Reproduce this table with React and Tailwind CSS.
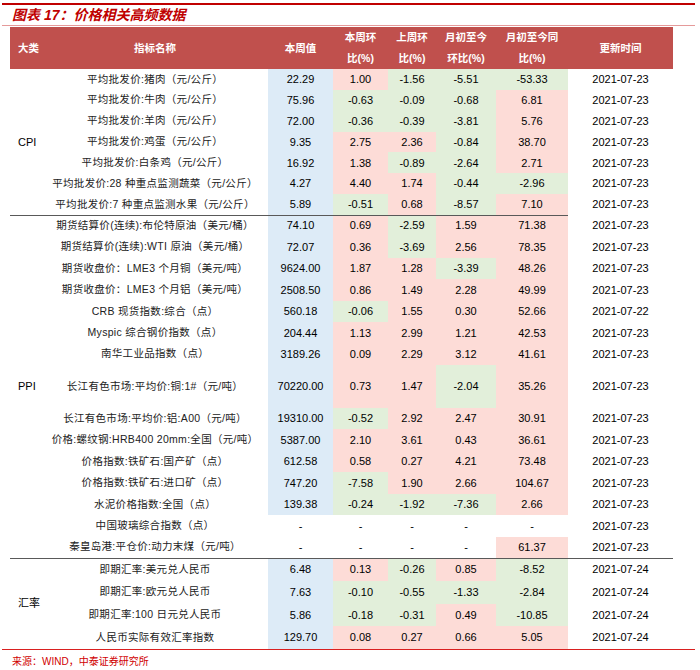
import React from "react";

const cpi = [
  ["平均批发价:猪肉（元/公斤）", "22.29", "1.00", "-1.56", "-5.51", "-53.33", "2021-07-23"],
  ["平均批发价:牛肉（元/公斤）", "75.96", "-0.63", "-0.09", "-0.68", "6.81", "2021-07-23"],
  ["平均批发价:羊肉（元/公斤）", "72.00", "-0.36", "-0.39", "-3.81", "5.76", "2021-07-23"],
  ["平均批发价:鸡蛋（元/公斤）", "9.35", "2.75", "2.36", "-0.84", "38.70", "2021-07-23"],
  ["平均批发价:白条鸡（元/公斤）", "16.92", "1.38", "-0.89", "-2.64", "2.71", "2021-07-23"],
  ["平均批发价:28 种重点监测蔬菜（元/公斤）", "4.27", "4.40", "1.74", "-0.44", "-2.96", "2021-07-23"],
  ["平均批发价:7 种重点监测水果（元/公斤）", "5.89", "-0.51", "0.68", "-8.57", "7.10", "2021-07-23"],
];

const ppi = [
  ["期货结算价(连续):布伦特原油（美元/桶）", "74.10", "0.69", "-2.59", "1.59", "71.38", "2021-07-23"],
  ["期货结算价(连续):WTI 原油（美元/桶）", "72.07", "0.36", "-3.69", "2.56", "78.35", "2021-07-23"],
  ["期货收盘价：LME3 个月铜（美元/吨）", "9624.00", "1.87", "1.28", "-3.39", "48.26", "2021-07-23"],
  ["期货收盘价：LME3 个月铝（美元/吨）", "2508.50", "0.86", "1.49", "2.28", "49.99", "2021-07-23"],
  ["CRB 现货指数:综合（点）", "560.18", "-0.06", "1.55", "0.30", "52.66", "2021-07-22"],
  ["Myspic 综合钢价指数（点）", "204.44", "1.13", "2.99", "1.21", "42.53", "2021-07-23"],
  ["南华工业品指数（点）", "3189.26", "0.09", "2.29", "3.12", "41.61", "2021-07-23"],
  ["长江有色市场:平均价:铜:1#（元/吨）", "70220.00", "0.73", "1.47", "-2.04", "35.26", "2021-07-23", true],
  ["长江有色市场:平均价:铝:A00（元/吨）", "19310.00", "-0.52", "2.92", "2.47", "30.91", "2021-07-23"],
  ["价格:螺纹钢:HRB400 20mm:全国（元/吨）", "5387.00", "2.10", "3.61", "0.43", "36.61", "2021-07-23"],
  ["价格指数:铁矿石:国产矿（点）", "612.58", "0.58", "0.27", "4.21", "73.48", "2021-07-23"],
  ["价格指数:铁矿石:进口矿（点）", "747.20", "-7.58", "1.90", "2.66", "104.67", "2021-07-23"],
  ["水泥价格指数:全国（点）", "139.38", "-0.24", "-1.92", "-7.36", "2.66", "2021-07-23"],
  ["中国玻璃综合指数（点）", "-", "-", "-", "-", "-", "2021-07-23"],
  ["秦皇岛港:平仓价:动力末煤（元/吨）", "-", "-", "-", "-", "61.37", "2021-07-23"],
];

const fx = [
  ["即期汇率:美元兑人民币", "6.48", "0.13", "-0.26", "0.85", "-8.52", "2021-07-24"],
  ["即期汇率:欧元兑人民币", "7.63", "-0.10", "-0.55", "-1.33", "-2.84", "2021-07-24"],
  ["即期汇率:100 日元兑人民币", "5.86", "-0.18", "-0.31", "0.49", "-10.85", "2021-07-24"],
  ["人民币实际有效汇率指数", "129.70", "0.08", "0.27", "0.66", "5.05", "2021-07-24"],
];

const sections = [
  { name: "CPI", rows: cpi, h: "h-[20.86px]", line: "" },
  { name: "PPI", rows: ppi, h: "h-[21.44px]", line: "part" },
  { name: "汇率", rows: fx, h: "h-[22.75px]", line: "full" },
];

const font = { fontFamily: '"Liberation Sans", "Noto Sans CJK SC", sans-serif' };
const line = "shadow-[inset_0_1px_0_#595959]";

const chg = (v) => (v === "-" ? "" : v.startsWith("-") ? "bg-[#E2EFDA]" : "bg-[#FDDCD7]");

function Head() {
  const th = "p-0 font-bold text-white text-[10.5px] leading-[21px] text-center";
  return (
    <tr className="h-[42px] bg-[#C0504D]">
      <th className={th + " text-left pl-2"}>大类</th>
      <th className={th}>指标名称</th>
      <th className={th}>本周值</th>
      <th className={th}>本周环<br />比(%)</th>
      <th className={th}>上周环<br />比(%)</th>
      <th className={th}>月初至今<br />环比(%)</th>
      <th className={th}>月初至今同<br />比(%)</th>
      <th className={th}>更新时间</th>
    </tr>
  );
}

function Section({ s }) {
  return s.rows.map((r, i) => {
    const top = i === 0 && s.line ? line : "";
    const dateTop = i === 0 && s.line === "full" ? line : "";
    const num = "p-0 text-center text-[11px] text-black whitespace-nowrap " + top;
    return (
      <tr key={i} className={r[7] ? "h-[42.88px]" : s.h}>
        {i === 0 && (
          <td rowSpan={s.rows.length} className={"p-0 pl-2 align-middle text-[11px] text-black " + top}>
            {s.name}
          </td>
        )}
        <td className={"p-0 text-center text-[10.5px] text-[#222] whitespace-nowrap tracking-[0.3px] " + top}>{r[0]}</td>
        <td className={num + " " + (r[1] === "-" ? "" : "bg-[#DDEBF7]")}>{r[1]}</td>
        <td className={num + " " + chg(r[2])}>{r[2]}</td>
        <td className={num + " " + chg(r[3])}>{r[3]}</td>
        <td className={num + " " + chg(r[4])}>{r[4]}</td>
        <td className={num + " " + chg(r[5])}>{r[5]}</td>
        <td className={"p-0 text-center text-[11px] text-black " + dateTop}>{r[6]}</td>
      </tr>
    );
  });
}

export default function App() {
  return (
    <div className="w-[700px] h-[670px] bg-white pt-[3px]" style={font}>
      <div className="ml-[2px] w-[693px] h-[2px] bg-[#C00000]" />
      <div className="h-[20px] pl-[12px] flex items-center text-[14px] font-bold italic text-[#C00000]">
        图表 17：价格相关高频数据
      </div>
      <div className="ml-[2px] w-[693px] h-[1px] bg-[#E59A9A]" />
      <table className="ml-[10px] mt-[1px] w-[663px] table-fixed border-collapse">
        <colgroup>
          <col className="w-[32px]" />
          <col className="w-[226px]" />
          <col className="w-[65px]" />
          <col className="w-[55px]" />
          <col className="w-[48px]" />
          <col className="w-[60px]" />
          <col className="w-[72px]" />
          <col className="w-[105px]" />
        </colgroup>
        <thead>
          <Head />
        </thead>
        <tbody>
          {sections.map((s) => (
            <Section key={s.name} s={s} />
          ))}
        </tbody>
      </table>
      <div className="ml-[2px] w-[693px] h-[1px] bg-[#D92020]" />
      <div className="pl-[12px] mt-[4px] text-[10px] text-[#D00000]">来源：WIND，中泰证券研究所</div>
    </div>
  );
}
